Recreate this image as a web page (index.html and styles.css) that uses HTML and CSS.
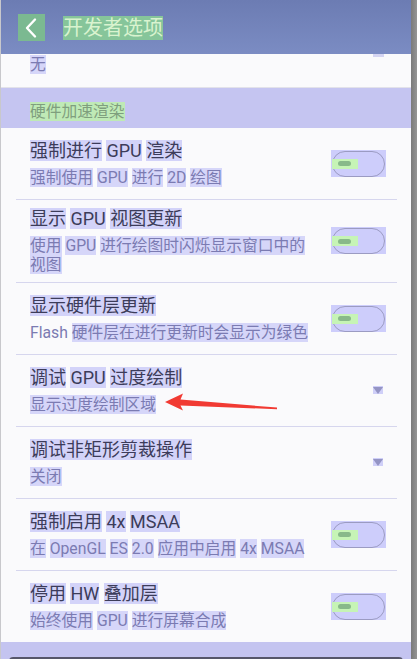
FILE: index.html
```html
<!DOCTYPE html>
<html lang="zh-CN">
<head>
<meta charset="utf-8">
<title>开发者选项</title>
<link rel="stylesheet" href="styles.css">
</head>
<body>
<div class="screen">
  <div class="phone">
    <header class="appbar">
      <div class="back">
        <svg width="27" height="27" viewBox="0 0 27 27"><path d="M17 5.5 L9 14 L17 22.5" fill="none" stroke="#ffffff" stroke-width="2.4" stroke-linecap="round" stroke-linejoin="round"/></svg>
      </div>
      <h1 class="title"><span class="hlg">开发者选项</span></h1>
      <div class="scrollmark"></div>
    </header>
    <main class="list">
      <div class="prev-row"><span class="sum"><span class="hl">无</span></span></div>
      <div class="line"></div>
      <div class="category"><span class="cat-hl">硬件加速渲染</span></div>

      <div class="pref">
        <div class="texts">
          <div class="ptitle"><span class="hl">强制进行</span> <span class="hl">GPU</span> <span class="hl">渲染</span></div>
          <div class="sum"><span class="hl">强制使用</span> <span class="hl">GPU</span> <span class="hl">进行</span> <span class="hl">2D</span> <span class="hl">绘图</span></div>
        </div>
        <div class="toggle"><div class="pill"><div class="knob-hl"><div class="knob"></div></div></div></div>
      </div>
      <div class="divider"></div>

      <div class="pref two">
        <div class="texts">
          <div class="ptitle"><span class="hl">显示</span> <span class="hl">GPU</span> <span class="hl">视图更新</span></div>
          <div class="sum"><span class="hl">使用</span> <span class="hl">GPU</span> <span class="hl">进行绘图时闪烁显示窗口中的</span><br><span class="hl">视图</span></div>
        </div>
        <div class="toggle"><div class="pill"><div class="knob-hl"><div class="knob"></div></div></div></div>
      </div>
      <div class="divider"></div>

      <div class="pref">
        <div class="texts">
          <div class="ptitle"><span class="hl">显示硬件层更新</span></div>
          <div class="sum">Flash <span class="hl">硬件层在进行更新时会显示为绿色</span></div>
        </div>
        <div class="toggle"><div class="pill"><div class="knob-hl"><div class="knob"></div></div></div></div>
      </div>
      <div class="divider"></div>

      <div class="pref">
        <div class="texts">
          <div class="ptitle"><span class="hl">调试</span> <span class="hl">GPU</span> <span class="hl">过度绘制</span></div>
          <div class="sum"><span class="hl">显示过度绘制区域</span></div>
        </div>
        <div class="drop"><div class="tri"></div></div>
      </div>
      <div class="divider"></div>

      <div class="pref">
        <div class="texts">
          <div class="ptitle"><span class="hl">调试非矩形剪裁操作</span></div>
          <div class="sum"><span class="hl">关闭</span></div>
        </div>
        <div class="drop"><div class="tri"></div></div>
      </div>
      <div class="divider"></div>

      <div class="pref">
        <div class="texts">
          <div class="ptitle"><span class="hl">强制启用</span> <span class="hl">4x</span> <span class="hl">MSAA</span></div>
          <div class="sum"><span class="hl">在</span> <span class="hl">OpenGL</span> <span class="hl">ES</span> <span class="hl">2.0</span> <span class="hl">应用中启用</span> <span class="hl">4x</span> <span class="hl">MSAA</span></div>
        </div>
        <div class="toggle"><div class="pill"><div class="knob-hl"><div class="knob"></div></div></div></div>
      </div>
      <div class="divider"></div>

      <div class="pref">
        <div class="texts">
          <div class="ptitle"><span class="hl">停用</span> <span class="hl">HW</span> <span class="hl">叠加层</span></div>
          <div class="sum"><span class="hl">始终使用</span> <span class="hl">GPU</span> <span class="hl">进行屏幕合成</span></div>
        </div>
        <div class="toggle"><div class="pill"><div class="knob-hl"><div class="knob"></div></div></div></div>
      </div>
    </main>
    <div class="bottom"><div class="navbar"></div></div>
  </div>
  <div class="edge"></div>
  <svg class="arrow" width="417" height="659" viewBox="0 0 417 659">
    <polygon points="165,402 183,393.5 180.5,399.5 277,407.6 277,409.2 180.5,405.5 183,410.5" fill="#f13a33"/>
  </svg>
</div>
</body>
</html>
```
FILE: styles.css
```css
* { box-sizing: border-box; }
html, body { margin: 0; padding: 0; }
body {
  width: 417px;
  height: 659px;
  overflow: hidden;
  background: #8c8c8c;
  font-family: Roboto, "Noto Sans CJK SC", "Noto Sans", sans-serif;
}
.screen {
  position: relative;
  display: flex;
  width: 417px;
  height: 659px;
}
.phone {
  width: 411px;
  height: 659px;
  background: #fafafc;
  display: flex;
  flex-direction: column;
  overflow: hidden;
  border-left: 1px solid #c8c8cc;
}
.edge {
  width: 6px;
  height: 659px;
  background: linear-gradient(to right, #7a7a7a, #959595);
}
.appbar {
  position: relative;
  height: 54px;
  flex: none;
  display: flex;
  align-items: center;
  background: linear-gradient(#6c7cb3, #7b8cc3);
  padding-left: 17px;
}
.back {
  width: 27px;
  height: 27px;
  background: #7bb991;
  display: flex;
}
.title {
  margin: 0 0 0 18px;
  font-size: 20px;
  font-weight: normal;
  line-height: 24px;
  padding-top: 1px;
}
.hlg {
  background: #86c59a;
  color: #d9f3cf;
}
.scrollmark {
  position: absolute;
  left: 372px;
  top: 54px;
  width: 11px;
  height: 3px;
  background: #d4d4f2;
}
.list {
  flex: none;
  display: flex;
  flex-direction: column;
}
.prev-row {
  height: 33px;
  padding: 1px 0 0 29px;
}
.line {
  height: 1px;
  background: #e2e2ea;
}
.category {
  height: 40px;
  background: #c5c5f1;
  padding: 14px 0 0 29px;
  font-size: 15.75px;
  line-height: 20px;
}
.cat-hl {
  background: #bfeab6;
  color: #7f9f7e;
}
.pref {
  min-height: 71px;
  display: flex;
  align-items: center;
  padding: 7px 25px 8px 29px;
}
.texts {
  flex: 1;
  display: flex;
  flex-direction: column;
  gap: 5px;
}
.ptitle {
  font-size: 18px;
  line-height: 24px;
  color: #3c3c5a;
}
.ptitle .hl { background: #d3d3f9; }
.sum {
  font-size: 15.75px;
  line-height: 19px;
  color: #7b7bb2;
}
.sum .hl { background: #d6d6f9; }
.divider {
  height: 1px;
  background: #d6d6ee;
  margin: 0 14px 0 15px;
}
.toggle {
  width: 55px;
  height: 27px;
  background: #cdcdfb;
  padding: 1px 1px 0 1px;
  flex: none;
}
.pill {
  width: 53px;
  height: 26px;
  border: 1px solid #9b9bc2;
  border-radius: 13px;
  display: flex;
  align-items: center;
}
.knob-hl {
  width: 26px;
  height: 10px;
  background: #c6f4b6;
  margin-left: -1px;
  display: flex;
  align-items: center;
  padding-left: 6px;
}
.knob {
  width: 13px;
  height: 5px;
  border-radius: 3px;
  background: #88b98a;
}
.drop {
  width: 10px;
  height: 8px;
  background: #cfcff8;
  margin-right: 3px;
  display: flex;
  align-items: center;
  justify-content: center;
  flex: none;
}
.tri {
  width: 0;
  height: 0;
  border-left: 5px solid transparent;
  border-right: 5px solid transparent;
  border-top: 7px solid #9494c4;
}
.bottom {
  flex: 1;
  background: #c4c4f0;
  padding: 15px 8px 0 8px;
}
.navbar {
  height: 12px;
  background: #56566a;
  border-radius: 4px 4px 0 0;
}
.arrow {
  position: absolute;
  left: 0;
  top: 0;
  pointer-events: none;
}
```
